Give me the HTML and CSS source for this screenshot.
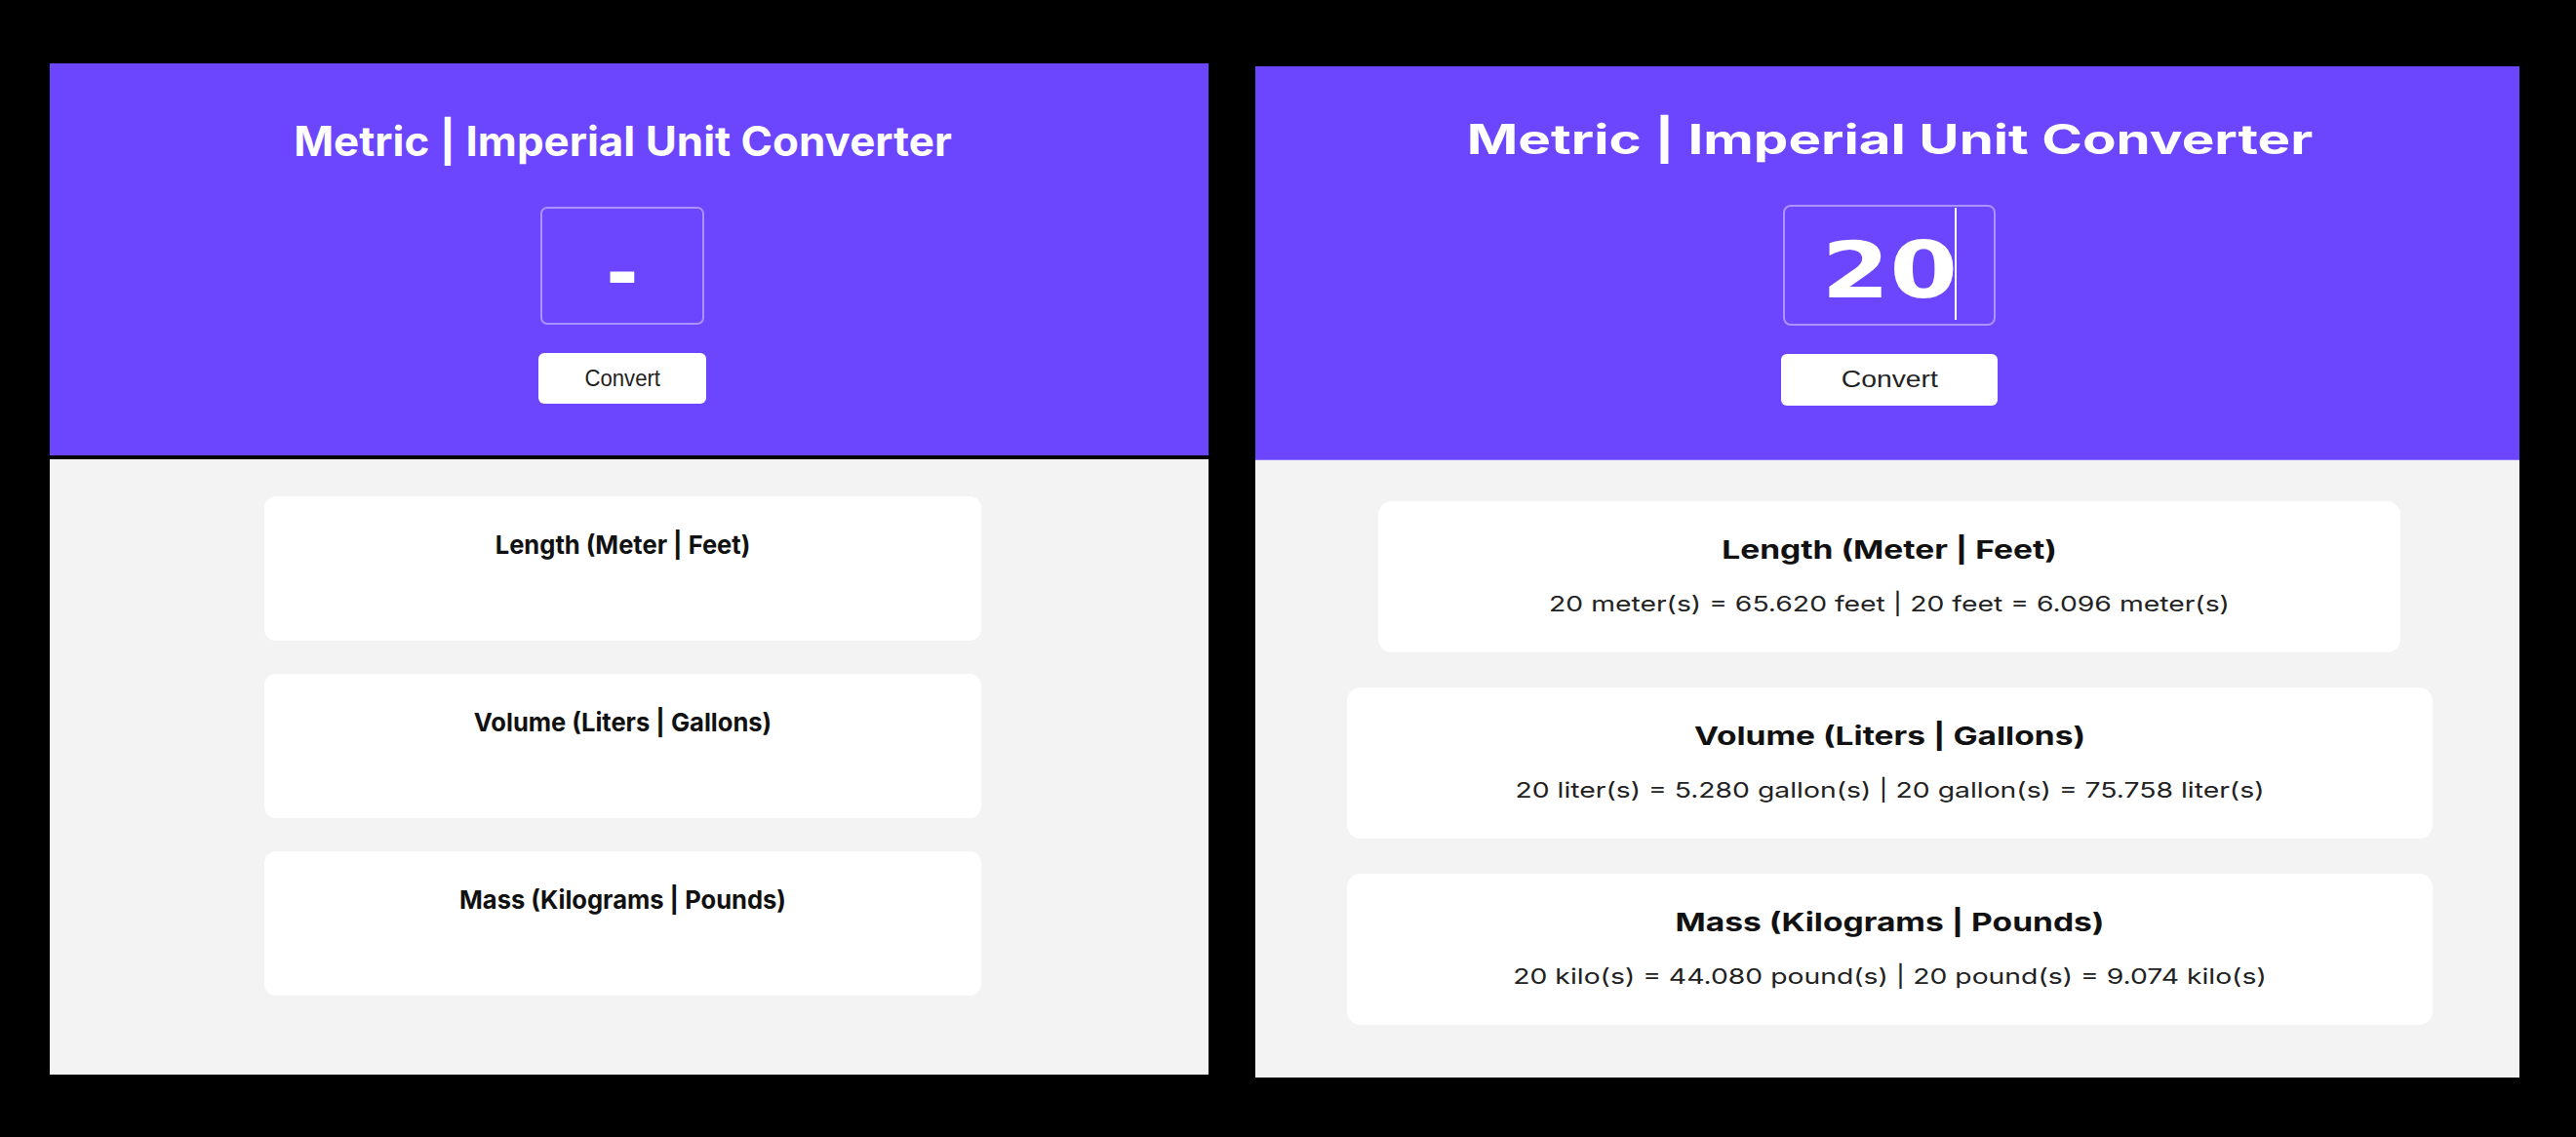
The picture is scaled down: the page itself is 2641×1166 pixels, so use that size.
FILE: index.html
```html
<!DOCTYPE html>
<html lang="en">
<head>
<meta charset="utf-8">
<title>Metric | Imperial Unit Converter</title>
<link rel="stylesheet" href="styles.css">
</head>
<body>
<div class="stage">
  <section class="panel panel--empty">
    <header class="hero">
      <h1 class="title">Metric | Imperial Unit Converter</h1>
      <div class="field"><span class="value">-</span></div>
      <button class="convert" type="button"><span class="convert-label">Convert</span></button>
    </header>
    <main class="results">
      <div class="card"><h2 class="card-title">Length (Meter | Feet)</h2><p class="card-text"></p></div>
      <div class="card"><h2 class="card-title">Volume (Liters | Gallons)</h2><p class="card-text"></p></div>
      <div class="card"><h2 class="card-title">Mass (Kilograms | Pounds)</h2><p class="card-text"></p></div>
    </main>
  </section>
  <section class="panel panel--filled">
    <header class="hero">
      <h1 class="title">Metric | Imperial Unit Converter</h1>
      <div class="field"><span class="value">20</span><span class="caret"></span></div>
      <button class="convert" type="button"><span class="convert-label">Convert</span></button>
    </header>
    <main class="results">
      <div class="card card--narrow"><h2 class="card-title">Length (Meter | Feet)</h2><p class="card-text">20 meter(s) = 65.620 feet | 20 feet = 6.096 meter(s)</p></div>
      <div class="card"><h2 class="card-title">Volume (Liters | Gallons)</h2><p class="card-text">20 liter(s) = 5.280 gallon(s) | 20 gallon(s) = 75.758 liter(s)</p></div>
      <div class="card"><h2 class="card-title">Mass (Kilograms | Pounds)</h2><p class="card-text">20 kilo(s) = 44.080 pound(s) | 20 pound(s) = 9.074 kilo(s)</p></div>
    </main>
  </section>
</div>
</body>
</html>
```
FILE: styles.css
```css
html, body {
  margin: 0;
  padding: 0;
  background: #000;
}

.stage {
  display: flex;
  align-items: flex-start;
  gap: 48px;
  padding: 65px 0 0 51px;
}

.panel {
  flex: none;
  height: 1037px;
  overflow: hidden;
  display: flex;
  flex-direction: column;
}

.panel--empty {
  width: 1188px;
  --title-sx: 1.046;
  --card-sx: 0.982;
  --text-sx: 0.97;
  --btn-sx: 0.962;
  --val-sx: 0.99;
}

.panel--filled {
  width: 1296px;
  margin-top: 3px;
  --title-sx: 1.345;
  --card-sx: 1.29;
  --text-sx: 1.287;
  --btn-sx: 1.23;
  --val-sx: 1.24;
}

.hero {
  flex: none;
  box-sizing: border-box;
  background: #6c45fe;
  display: flex;
  flex-direction: column;
  align-items: center;
}

.panel--empty .hero {
  height: 406px;
  padding: 54px 14px 0 0;
  border-bottom: 4px solid #050505;
}

.panel--filled .hero {
  height: 404px;
  padding: 49px 0 0 4px;
  border-bottom: 1px solid #8f76ff;
}

.title {
  margin: 0;
  font-family: Inter, "Noto Sans", sans-serif;
  font-weight: 700;
  font-size: 42px;
  line-height: 52px;
  color: #fff;
  white-space: nowrap;
  transform: scaleX(var(--title-sx));
}

.field {
  position: relative;
  box-sizing: border-box;
  margin-top: 41px;
  border: 2px solid rgba(255, 255, 255, 0.42);
  border-radius: 8px;
  padding-top: 25px;
  text-align: center;
}

.panel--empty .field {
  width: 168px;
  height: 121px;
  border-radius: 7px;
}

.panel--filled .field {
  width: 218px;
  height: 124px;
}

.value {
  display: inline-block;
  font-family: "DejaVu Sans", sans-serif;
  font-weight: 700;
  font-size: 81px;
  line-height: 81px;
  color: #fff;
  transform: scaleX(var(--val-sx));
}

.caret {
  position: absolute;
  left: 174px;
  top: 1px;
  width: 2px;
  height: 115px;
  background: #fff;
}

.convert {
  box-sizing: border-box;
  margin-top: 29px;
  border: none;
  border-radius: 6px;
  background: #fff;
  padding: 0;
}

.panel--empty .convert {
  width: 172px;
  height: 52px;
}

.panel--filled .convert {
  width: 222px;
  height: 53px;
}

.convert-label {
  display: inline-block;
  color: #222;
  font-family: "Liberation Sans", Arial, sans-serif;
  font-size: 23px;
  transform: scaleX(var(--btn-sx));
}

.results {
  flex: 1;
  background: #f3f3f3;
  display: flex;
  flex-direction: column;
  align-items: center;
}

.panel--empty .results {
  padding: 38px 14px 0 0;
  gap: 34px;
}

.panel--filled .results {
  padding: 42px 0 0 4px;
  gap: 36px;
}

.card {
  box-sizing: border-box;
  background: #fff;
  border-radius: 14px;
  padding-top: 34px;
  text-align: center;
}

.panel--empty .card {
  width: 735px;
  height: 148px;
  border-radius: 12px;
}

.panel--filled .card {
  width: 1113px;
  height: 155px;
}

.panel--filled .card--narrow {
  width: 1048px;
}

.card-title {
  margin: 0;
  font-family: Inter, "Noto Sans", sans-serif;
  font-weight: 700;
  font-size: 26px;
  line-height: 32px;
  color: #111;
  transform: scaleX(var(--card-sx));
}

.card-text {
  margin: 25px 0 0;
  font-family: Inter, "Noto Sans", sans-serif;
  font-weight: 400;
  font-size: 22px;
  line-height: 28px;
  color: #222;
  transform: scaleX(var(--text-sx));
}
```
